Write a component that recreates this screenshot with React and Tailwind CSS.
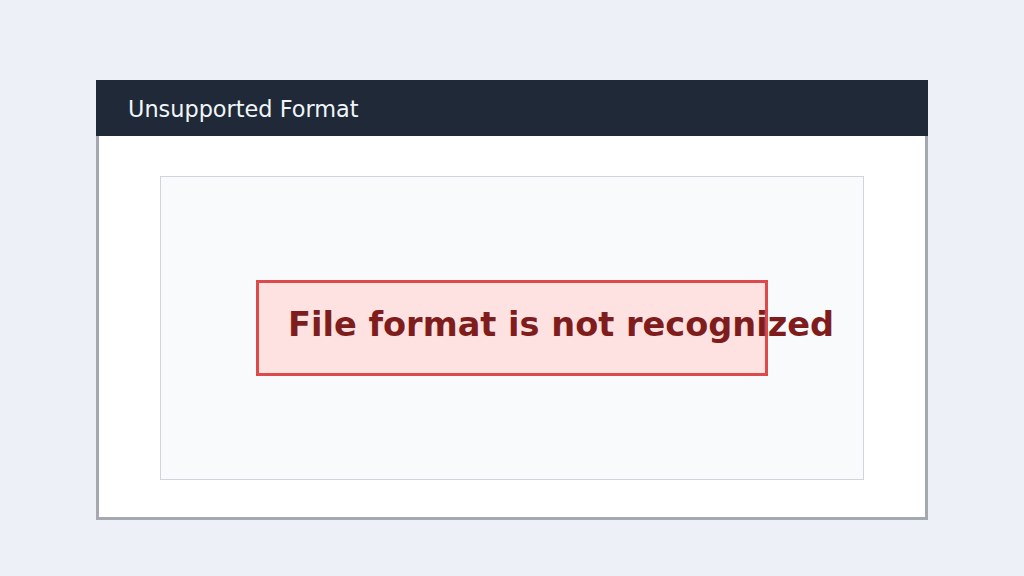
import React from "react"

const font = { fontFamily: '"DejaVu Sans", "Noto Sans", sans-serif' }

const App = () => {
  return (
    <div className="min-h-screen w-full bg-[#edf1f7] pt-20" style={font}>
      <div className="mx-auto w-[832px]">
        <header className="h-14 bg-[#1f2937] flex items-center px-8 pt-[3px]">
          <h1 className="text-[22.4px] text-[#f1f5f9]">Unsupported Format</h1>
        </header>
        <section className="bg-white border-x-[3px] border-b-[3px] border-[#a3a8b1] px-[61px] pt-10 pb-[37px]">
          <div className="h-[304px] bg-[#f8fafc] border border-[#d1d5db] flex items-center justify-center">
            <div className="w-[512px] h-[96px] bg-[#fee2e2] border-[3px] border-[#dc4a4a] pl-[29px] pt-[22px]">
              <p className="whitespace-nowrap text-[33.6px] leading-[40px] font-bold text-[#7f1d1d]">
                File format is not recognized
              </p>
            </div>
          </div>
        </section>
      </div>
    </div>
  )
}

export default App
